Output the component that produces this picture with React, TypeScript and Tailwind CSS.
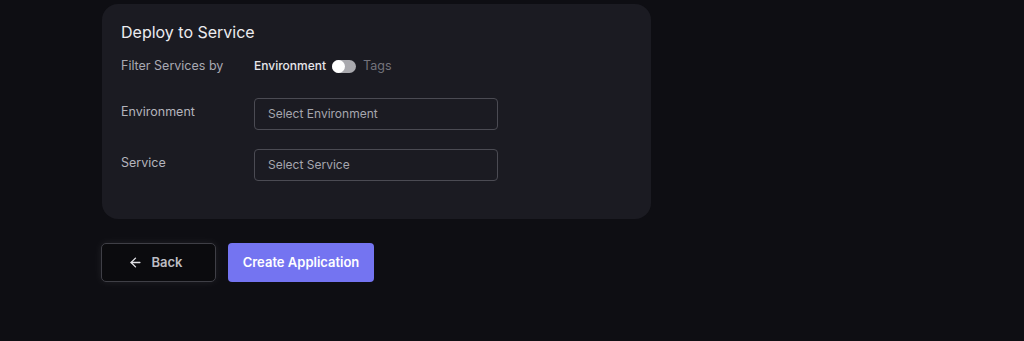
import { ArrowLeft } from "lucide-react"

export default function App() {
  return (
    <div
      className="min-h-screen bg-[#0e0e13] pl-[102px] pt-[4px]"
      style={{ fontFamily: "Inter, 'Noto Sans', sans-serif" }}
    >
      <section className="w-[549px] rounded-2xl bg-[#1b1b22] px-[19px] pb-[38px] pt-[16px]">
        <h2 className="text-[16px] leading-6 text-[#ececf0]">Deploy to Service</h2>

        <div className="mt-[12px] flex items-center text-[12.5px] leading-5">
          <span className="w-[133px] text-[#a9a9b2]">Filter Services by</span>
          <span className="text-[12px] font-medium text-[#e6e6ea]">Environment</span>
          <button className="ml-[6px] flex h-[13px] w-6 items-center rounded-full bg-[#a9a9ae]">
            <span className="h-[13px] w-[13px] rounded-full bg-white" />
          </button>
          <span className="ml-[7px] text-[#74747c]">Tags</span>
        </div>

        <div className="mt-[22px] flex flex-col gap-[19px]">
          {[
            { label: "Environment", placeholder: "Select Environment" },
            { label: "Service", placeholder: "Select Service" },
          ].map((f) => (
            <div key={f.label} className="flex items-center">
              <span className="-mt-1 w-[133px] text-[12.5px] text-[#b4b4bc]">{f.label}</span>
              <div className="flex h-8 w-[244px] items-center rounded-[4px] border border-[#4b4b53] px-[13px] text-[12px] text-[#a6a6ae]">
                {f.placeholder}
              </div>
            </div>
          ))}
        </div>
      </section>

      <div className="ml-[-1px] mt-6 flex gap-3">
        <button className="flex h-[39px] w-[115px] items-center justify-center gap-[8px] rounded-[5px] border border-[#3f3f46] bg-[#0b0b0e] pr-[6px] text-[13px] font-semibold text-[#bdbdc3] shadow-[0_0_8px_rgba(255,255,255,0.08)]">
          <ArrowLeft className="h-[15px] w-[15px] text-[#e4e4e8]" strokeWidth={2.2} />
          Back
        </button>
        <button className="h-[39px] w-[146px] rounded-[4px] bg-[#7474f1] text-[13px] font-semibold text-white">
          Create Application
        </button>
      </div>
    </div>
  )
}
